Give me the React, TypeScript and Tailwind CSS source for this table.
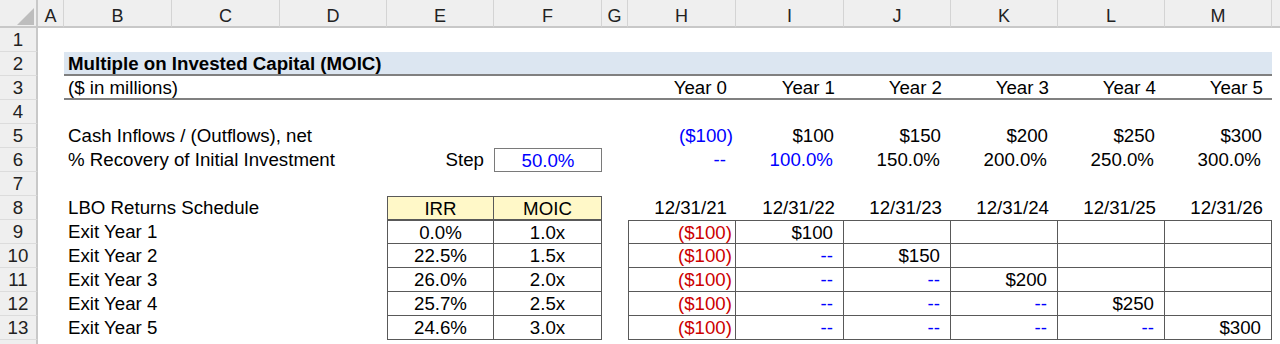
import type { ReactNode } from "react";

const letters = ["A", "B", "C", "D", "E", "F", "G", "H", "I", "J", "K", "L", "M"];
const years = ["Year 0", "Year 1", "Year 2", "Year 3", "Year 4", "Year 5"];
const dates = ["12/31/21", "12/31/22", "12/31/23", "12/31/24", "12/31/25", "12/31/26"];
const flows = ["$100", "$150", "$200", "$250", "$300"];
const recovery = ["100.0%", "150.0%", "200.0%", "250.0%", "300.0%"];
const exits = [
  { irr: "0.0%", moic: "1.0x" },
  { irr: "22.5%", moic: "1.5x" },
  { irr: "26.0%", moic: "2.0x" },
  { irr: "25.7%", moic: "2.5x" },
  { irr: "24.6%", moic: "3.0x" },
];

const blue = "text-[#0000ff]";
const red = "text-[#cc0000]";

function Cell({ className = "", children }: { className?: string; children?: ReactNode }) {
  return (
    <div className={`min-w-0 whitespace-nowrap leading-[24px] ${className}`}>
      {children}
    </div>
  );
}

function RowNum({ n }: { n?: number }) {
  return (
    <div className="border-r-2 border-b border-r-[#c8c8c8] border-b-[#dcdcdc] bg-[#efefef] text-center leading-[24px] text-[#222]">
      {n}
    </div>
  );
}

function Blank() {
  return <Cell className="col-span-14" />;
}

function tableCls(row: number, col: number) {
  if (row === 0 && col === 0) return "border border-[#595959]";
  if (row === 0) return "border-t border-r border-b border-[#595959]";
  if (col === 0) return "border-x border-b border-[#595959]";
  return "border-r border-b border-[#595959]";
}

export default function App() {
  return (
    <div className="h-[344px] w-[1280px] overflow-hidden bg-white font-['Liberation_Sans',Arial,sans-serif] text-[18.7px] text-black">
      <div className="grid grid-cols-[38px_26px_108px_108px_107px_107px_108px_26px_108px_108px_107px_107px_107px_107px_1fr] grid-rows-[28px_repeat(14,24px)]">
        {/* column headers */}
        <div className="relative border-r-2 border-b-2 border-[#c8c8c8] bg-[#efefef]">
          <svg className="absolute right-[2px] bottom-[1px]" width="17" height="17" viewBox="0 0 17 17">
            <polygon points="17,0 17,17 0,17" fill="#bdbdbd" />
          </svg>
        </div>
        {letters.map((l) => (
          <div
            key={l}
            className="border-r border-b-2 border-r-[#d4d4d4] border-b-[#c8c8c8] bg-[#efefef] pt-[4px] text-center text-[18px] leading-[24px] text-[#222]"
          >
            {l}
          </div>
        ))}
        <div className="border-b-2 border-b-[#c8c8c8] bg-[#efefef]" />

        <RowNum n={1} />
        <Blank />

        <RowNum n={2} />
        <Cell />
        <Cell className="col-span-12 border-b-2 border-[#808080] bg-[#dce6f1] pl-[4px] font-bold">
          Multiple on Invested Capital (MOIC)
        </Cell>
        <Cell />

        <RowNum n={3} />
        <Cell />
        <Cell className="col-span-6 border-b-2 border-[#808080] pl-[4px]">($ in millions)</Cell>
        {years.map((y) => (
          <Cell key={y} className="border-b-2 border-[#808080] pr-[9px] text-right">
            {y}
          </Cell>
        ))}
        <Cell />

        <RowNum n={4} />
        <Blank />

        <RowNum n={5} />
        <Cell />
        <Cell className="col-span-6 pl-[4px]">Cash Inflows / (Outflows), net</Cell>
        <Cell className={`pr-[3px] text-right ${blue}`}>($100)</Cell>
        {flows.map((f) => (
          <Cell key={f} className="pr-[10px] text-right">
            {f}
          </Cell>
        ))}
        <Cell />

        <RowNum n={6} />
        <Cell />
        <Cell className="col-span-3 pl-[4px]">% Recovery of Initial Investment</Cell>
        <Cell className="pr-[10px] text-right">Step</Cell>
        <Cell className={`border border-[#7a7a7a] text-center leading-[22px] ${blue}`}>50.0%</Cell>
        <Cell />
        <Cell className={`pr-[10px] text-right ${blue}`}>--</Cell>
        {recovery.map((r, i) => (
          <Cell key={r} className={`pr-[11px] text-right ${i === 0 ? blue : ""}`}>
            {r}
          </Cell>
        ))}
        <Cell />

        <RowNum n={7} />
        <Blank />

        <RowNum n={8} />
        <Cell />
        <Cell className="col-span-3 pl-[4px]">LBO Returns Schedule</Cell>
        <Cell className="border border-[#595959] bg-[#fff8c8] text-center leading-[22px]">IRR</Cell>
        <Cell className="border-y border-r border-[#595959] bg-[#fff8c8] text-center leading-[22px]">MOIC</Cell>
        <Cell />
        {dates.map((d) => (
          <Cell key={d} className="pr-[9px] text-right">
            {d}
          </Cell>
        ))}
        <Cell />

        {exits.map((e, r) => (
          <div key={r} className="contents">
            <RowNum n={9 + r} />
            <Cell />
            <Cell className="col-span-3 pl-[4px]">Exit Year {r + 1}</Cell>
            <Cell className={`text-center leading-[22px] ${tableCls(r, 0)}`}>{e.irr}</Cell>
            <Cell className={`text-center leading-[22px] ${tableCls(r, 1)}`}>{e.moic}</Cell>
            <Cell />
            <Cell className={`pr-[3px] text-right leading-[22px] ${red} ${tableCls(r, 0)}`}>($100)</Cell>
            {[0, 1, 2, 3, 4].map((j) => (
              <Cell
                key={j}
                className={`pr-[10px] text-right leading-[22px] ${j < r ? blue : ""} ${tableCls(r, 1)}`}
              >
                {j < r ? "--" : j === r ? flows[r] : ""}
              </Cell>
            ))}
            <Cell />
          </div>
        ))}

        <RowNum />
        <Blank />
      </div>
    </div>
  );
}
